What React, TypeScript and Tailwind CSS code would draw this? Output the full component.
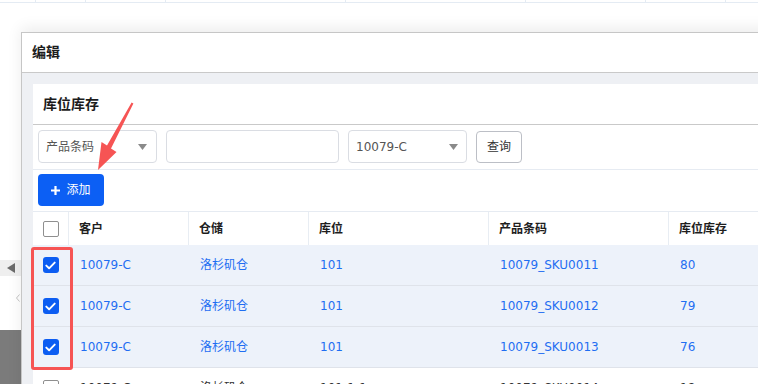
const rows = [
  { customer: "10079-C", warehouse: "洛杉矶仓", bin: "101", sku: "10079_SKU0011", qty: "80", checked: true },
  { customer: "10079-C", warehouse: "洛杉矶仓", bin: "101", sku: "10079_SKU0012", qty: "79", checked: true },
  { customer: "10079-C", warehouse: "洛杉矶仓", bin: "101", sku: "10079_SKU0013", qty: "76", checked: true },
  { customer: "10079-C", warehouse: "洛杉矶仓", bin: "101-1-1", sku: "10079_SKU0014", qty: "18", checked: false },
];

function Caret() {
  return (
    <svg width="9" height="6" viewBox="0 0 9 6" aria-hidden="true">
      <path d="M0 0h9L4.5 6z" fill="#8a8a8a" />
    </svg>
  );
}

function Checkbox({ checked }: { checked: boolean }) {
  if (!checked) {
    return <span className="block w-[16px] h-[16px] rounded-[2px] border border-[#8f8f8f] bg-white" />;
  }
  return (
    <span className="flex w-[16px] h-[16px] items-center justify-center rounded-[3px] bg-[#0c5df2]">
      <svg width="11" height="9" viewBox="0 0 11 9" aria-hidden="true">
        <path d="M1.3 4.6 4.1 7.3 9.7 1.6" fill="none" stroke="#fff" strokeWidth="1.9" strokeLinecap="round" strokeLinejoin="round" />
      </svg>
    </span>
  );
}

export default function App() {
  return (
    <div className="relative w-[758px] h-[384px] overflow-hidden bg-white font-['DejaVu_Sans','Noto_Sans_CJK_SC',sans-serif]">
      {/* page table behind the dialog */}
      <div className="flex h-[3px] border-b border-[#e4ebf3]">
        <div className="w-[36px] border-r border-[#e4ebf3]" />
        <div className="w-[50px] border-r border-[#e4ebf3]" />
        <div className="w-[80px] border-r border-[#e4ebf3]" />
        <div className="w-[180px] border-r border-[#e4ebf3]" />
        <div className="w-[180px] border-r border-[#e4ebf3]" />
        <div className="w-[120px] border-r border-[#e4ebf3]" />
        <div className="w-[80px] border-r border-[#e4ebf3]" />
        <div className="flex-1" />
      </div>

      {/* page left edge */}
      <div className="flex flex-col w-[21px] h-[381px]">
        <div className="h-[257px]" />
        <div className="flex h-[16px] items-center bg-[#efefef] pl-[7px]">
          <svg width="8" height="10" viewBox="0 0 8 10" aria-hidden="true">
            <path d="M8 0v10L0 5z" fill="#6b6b6b" />
          </svg>
        </div>
        <div className="flex h-[54px] items-start justify-end pt-[18px] pr-[1px]">
          <svg width="4" height="8" viewBox="0 0 4 8" aria-hidden="true">
            <path d="M3.5.5.5 4l3 3.5" fill="none" stroke="#c4c4c4" strokeWidth="1" />
          </svg>
        </div>
        <div className="flex-1 bg-[#7b7b7b]" />
      </div>

      {/* dialog */}
      <div className="absolute left-[21px] top-[32px] w-[760px] h-[370px] border border-[#c6c6c6] bg-white shadow-[0_-4px_14px_rgba(0,0,0,0.08)]">
        <div className="flex h-[40px] items-center border-b border-[#c9c9c9] pl-[10px] text-[14px] font-bold text-[#1c1c1c]">
          编辑
        </div>
        <div className="h-full bg-[#eef0f4] pl-[11px] pt-[11px]">
          <div className="bg-white">
            <div className="flex h-[41px] items-center border-b border-[#c9c9c9] pl-[10px] text-[14px] font-bold text-[#1c1c1c]">
              库位库存
            </div>

            {/* filters */}
            <div className="flex h-[45px] gap-[9px] border-b border-[#e6ebf2] pl-[5px] pt-[5px]">
              <div className="flex w-[119px] h-[33px] items-center justify-between rounded-[4px] border border-[#dadde3] pl-[7px] pr-[9px] text-[12px] text-[#555]">
                <span>产品条码</span>
                <Caret />
              </div>
              <div className="w-[173px] h-[33px] rounded-[4px] border border-[#dadde3]" />
              <div className="flex w-[119px] h-[33px] items-center justify-between rounded-[4px] border border-[#dadde3] pl-[7px] pr-[8px] text-[12px] text-[#555]">
                <span>10079-C</span>
                <Caret />
              </div>
              <div className="flex w-[46px] h-[32px] mt-[1px] items-center justify-center rounded-[4px] border border-[#bcbfc6] text-[12px] text-[#333]">
                查询
              </div>
            </div>

            {/* toolbar */}
            <div className="h-[42px] border-b border-[#e6ebf2] pl-[5px] pt-[4px]">
              <div className="flex w-[66px] h-[32px] items-center justify-center gap-[6px] rounded-[4px] bg-[#0c5ff4] text-[12px] text-white">
                <svg width="9" height="9" viewBox="0 0 9 9" aria-hidden="true">
                  <path d="M4.5 0v9M0 4.5h9" stroke="#fff" strokeWidth="2.2" />
                </svg>
                <span>添加</span>
              </div>
            </div>

            {/* table */}
            <div className="flex h-[33px] items-center text-[12px] font-bold text-[#1e1e1e]">
              <div className="flex w-[36px] h-full items-center justify-center border-r border-[#e8edf3]">
                <Checkbox checked={false} />
              </div>
              <div className="flex w-[120px] h-full items-center border-r border-[#e8edf3] pl-[10px]">客户</div>
              <div className="flex w-[120px] h-full items-center border-r border-[#e8edf3] pl-[10px]">仓储</div>
              <div className="flex w-[180px] h-full items-center border-r border-[#e8edf3] pl-[10px]">库位</div>
              <div className="flex w-[180px] h-full items-center border-r border-[#e8edf3] pl-[10px]">产品条码</div>
              <div className="flex flex-1 h-full items-center pl-[10px]">库位库存</div>
            </div>
            {rows.map((r, i) => (
              <div
                key={i}
                className={
                  r.checked
                    ? "flex h-[41px] items-center border-b border-[#dfe3ea] bg-[#edf2fa] text-[12px] text-[#1f6ef2]"
                    : "flex h-[41px] items-center border-b border-[#dfe3ea] bg-white text-[12px] text-[#333]"
                }
              >
                <div className="flex w-[36px] justify-center pr-[1px]">
                  <Checkbox checked={r.checked} />
                </div>
                <div className="w-[120px] pl-[11px]">{r.customer}</div>
                <div className="w-[120px] pl-[11px]">{r.warehouse}</div>
                <div className="w-[180px] pl-[11px]">{r.bin}</div>
                <div className="w-[180px] pl-[11px]">{r.sku}</div>
                <div className="flex-1 pl-[11px]">{r.qty}</div>
              </div>
            ))}
          </div>
        </div>
      </div>

      {/* annotation: red box */}
      <div className="absolute left-[31px] top-[247px] w-[42px] h-[123px] rounded-[3px] border-[3px] border-[#f65454]" />

      {/* annotation: red arrow */}
      <svg className="absolute left-0 top-0 pointer-events-none" width="758" height="384" aria-hidden="true">
        <path d="M98 170 L101.5 142 L107 145.5 L131.6 102.6 L133.4 103.4 L111 148.5 L116.5 152 Z" fill="#f65454" />
      </svg>
    </div>
  );
}
